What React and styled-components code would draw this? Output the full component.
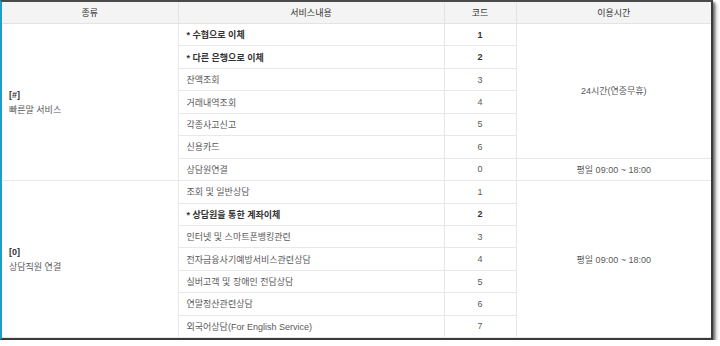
import React from 'react';
import styled, {createGlobalStyle} from "styled-components";

const GlobalStyle = createGlobalStyle`
  html, body {
    margin: 0;
    padding: 0;
    background: #fff;
  }
  body {
    font-family: "Liberation Sans", "Noto Sans CJK KR", sans-serif;
  }
`

const Frame = styled.div`
  width: 709px;
  border-top: 2px solid #4a4a4a;
  border-left: 2px solid #1a9fc9;
  border-right: 2px solid #3a3a3a;
  border-bottom: 2px solid #3a3a3a;
  box-shadow: 2px 2px 2px rgba(0, 0, 0, .45), 4px 4px 3px rgba(0, 0, 0, .2);
  background: #fff;
`

const Table = styled.table`
  width: 709px;
  border-collapse: collapse;
  table-layout: fixed;
  font-size: 9px;
  color: #555;
`

const Th = styled.th`
  height: 21px;
  padding: 0;
  background: #f4f4f4;
  border-bottom: 1px solid #e3e3e3;
  border-left: 1px solid #e3e3e3;
  font-weight: normal;
  color: #333;
  text-align: center;
  &:first-child {
    border-left: none;
  }
`

const Td = styled.td`
  height: 21.45px;
  padding: 0 ${({$align}) => $align === "left" ? "8px" : "0"};
  border-bottom: 1px solid #e8e8e8;
  border-left: 1px solid #e8e8e8;
  text-align: ${({$align}) => $align || "center"};
  font-weight: ${({$bold}) => $bold ? 700 : 400};
  color: ${({$bold}) => $bold ? "#333" : "#595959"};
  vertical-align: middle;
  white-space: nowrap;
`

const KindCell = styled(Td)`
  border-left: none;
  line-height: 12px;
  padding-left: 7px;
  padding-top: 1px;
  text-align: left;
`

const KindKey = styled.div`
  font-weight: 700;
  color: #333;
  margin-bottom: 3px;
`

const groups = [
    {
        key: "[#]",
        name: "빠른말 서비스",
        rows: [
            {label: "* 수협으로 이체", code: 1, bold: true},
            {label: "* 다른 은행으로 이체", code: 2, bold: true},
            {label: "잔액조회", code: 3},
            {label: "거래내역조회", code: 4},
            {label: "각종사고신고", code: 5},
            {label: "신용카드", code: 6},
            {label: "상담원연결", code: 0},
        ],
        times: [{text: "24시간(연중무휴)", span: 6}, {text: "평일 09:00 ~ 18:00", span: 1}],
    },
    {
        key: "[0]",
        name: "상담직원 연결",
        rows: [
            {label: "조회 및 일반상담", code: 1},
            {label: "* 상담원을 통한 계좌이체", code: 2, bold: true},
            {label: "인터넷 및 스마트폰뱅킹관련", code: 3},
            {label: "전자금융사기예방서비스관련상담", code: 4},
            {label: "실버고객 및 장애인 전담상담", code: 5},
            {label: "연말정산관련상담", code: 6},
            {label: "외국어상담(For English Service)", code: 7},
        ],
        times: [{text: "평일 09:00 ~ 18:00", span: 7}],
    },
]

const timeAt = (times, index) => {
    let start = 0
    for (const t of times) {
        if (index === start) return t
        start += t.span
    }
    return null
}

const App = () => {
    return (
        <>
            <GlobalStyle/>
            <Frame>
                <Table>
                    <colgroup>
                        <col style={{width: 176}}/>
                        <col style={{width: 266}}/>
                        <col style={{width: 72}}/>
                        <col style={{width: 195}}/>
                    </colgroup>
                    <thead>
                    <tr>
                        <Th>종류</Th>
                        <Th>서비스내용</Th>
                        <Th>코드</Th>
                        <Th>이용시간</Th>
                    </tr>
                    </thead>
                    <tbody>
                    {
                        groups.map(group => group.rows.map((row, index) => {
                            const time = timeAt(group.times, index)
                            return <tr key={group.key + index}>
                                {index === 0 &&
                                    <KindCell rowSpan={group.rows.length}>
                                        <KindKey>{group.key}</KindKey>
                                        {group.name}
                                    </KindCell>
                                }
                                <Td $align="left" $bold={row.bold}>{row.label}</Td>
                                <Td $bold={row.bold}>{row.code}</Td>
                                {time && <Td rowSpan={time.span}>{time.text}</Td>}
                            </tr>
                        }))
                    }
                    </tbody>
                </Table>
            </Frame>
        </>
    );
};

export default App;
